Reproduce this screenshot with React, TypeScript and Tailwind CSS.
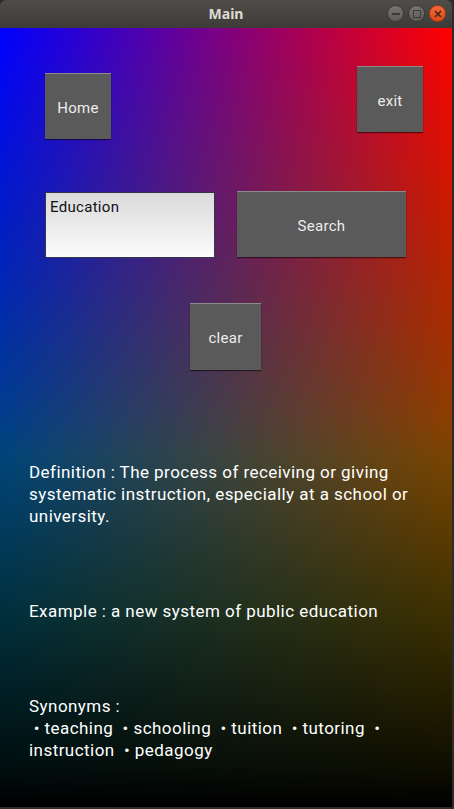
import React from "react";

function KButton({ label, className }: { label: string; className: string }) {
  return (
    <div
      className={`flex items-center justify-center pt-[3px] bg-[#5a5a5a] border-t border-t-white/30 shadow-[0_1px_1px_rgba(0,0,0,0.55)] text-[15px] tracking-[0.3px] text-[#ececec] ${className}`}
    >
      {label}
    </div>
  );
}

export default function App() {
  return (
    <div className="w-[454px] h-[809px] bg-[#2b2b2b] font-['Roboto',sans-serif]">
      <div className="w-[452px] h-[807px] flex flex-col">
        {/* Title bar */}
        <div className="relative h-[28px] shrink-0 rounded-t-[6px] bg-[linear-gradient(to_bottom,#4f4d49,#3c3b37)] flex items-center justify-center">
          <span className="font-['Noto_Sans',sans-serif] font-bold text-[14px] text-[#dfdbd2] leading-none -mt-[1px]">
            Main
          </span>
          <div className="absolute right-[6px] top-[5px] flex gap-[4px]">
            <div className="w-[17px] h-[17px] rounded-full bg-[linear-gradient(to_bottom,#777672,#5d5c58)] border border-[#3a3936] flex items-center justify-center">
              <div className="w-[8px] h-[2px] bg-[#3c3b37]" />
            </div>
            <div className="w-[17px] h-[17px] rounded-full bg-[linear-gradient(to_bottom,#777672,#5d5c58)] border border-[#3a3936] flex items-center justify-center">
              <div className="w-[8px] h-[8px] border-[1.5px] border-[#3c3b37]" />
            </div>
            <div className="w-[17px] h-[17px] rounded-full bg-[linear-gradient(to_bottom,#f26a3a,#df4b16)] border border-[#a8390f] flex items-center justify-center">
              <svg width="8" height="8" viewBox="0 0 8 8">
                <path d="M1 1 L7 7 M7 1 L1 7" stroke="#3c2a20" strokeWidth="1.6" />
              </svg>
            </div>
          </div>
        </div>

        {/* Content */}
        <div className="flex-1 flex flex-col [background-image:linear-gradient(to_bottom,rgb(0,0,0)_0%,rgb(0,35,0)_30%,rgb(0,68,0)_55%,rgb(0,48,0)_75%,rgb(0,14,0)_95%,rgb(0,0,0)_100%),linear-gradient(to_bottom,#ffffff_0%,#8c8c8c_50%,#7a7a7a_55%,#3e3e3e_75%,#0c0c0c_96%,#000000_100%),linear-gradient(to_right,#0000ff,#ff0000)] [background-blend-mode:screen,multiply,normal]">
          {/* Row 1 */}
          <div className="flex justify-between items-start pl-[45px] pr-[29px] pt-[38px]">
            <KButton label="Home" className="w-[66px] h-[66px] mt-[7px]" />
            <KButton label="exit" className="w-[66px] h-[66px] text-[#dcdcdc]" />
          </div>

          {/* Row 2 */}
          <div className="flex items-start gap-[22px] pl-[45px] mt-[52px]">
            <div className="w-[170px] h-[66px] mt-[1px] border border-[#35354a] bg-[linear-gradient(to_bottom,#dadada,#fbfbfb)] px-[4px] pt-[5px] text-[15px] tracking-[0.3px] text-[#111] leading-[18px]">
              Education
            </div>
            <KButton label="Search" className="w-[169px] h-[66px]" />
          </div>

          {/* Row 3 */}
          <div className="flex pl-[190px] mt-[45px]">
            <KButton label="clear" className="w-[71px] h-[67px]" />
          </div>

          {/* Texts */}
          <div className="pl-[29px] text-white text-[17px] leading-[22px] tracking-[0.45px]">
            <p className="w-[400px] mt-[91px]">
              Definition : The process of receiving or giving systematic instruction, especially at a school or university.
            </p>
            <p className="mt-[73px]">Example : a new system of public education</p>
            <div className="mt-[73px] whitespace-pre">
              <div>Synonyms :</div>
              <div>{" • teaching  • schooling  • tuition  • tutoring  •"}</div>
              <div>{"instruction  • pedagogy"}</div>
            </div>
          </div>
        </div>
      </div>
    </div>
  );
}
